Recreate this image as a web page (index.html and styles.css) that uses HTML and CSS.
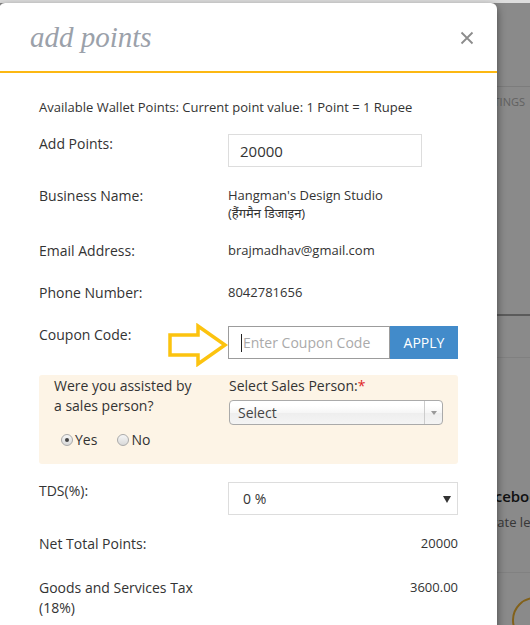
FILE: index.html
```html
<!DOCTYPE html>
<html lang="en">
<head>
  <meta charset="UTF-8">
  <meta name="viewport" content="width=device-width, initial-scale=1.0">
  <title>Add Points</title>
  <link rel="stylesheet" href="styles.css">
</head>
<body>
  <!-- page behind the dialog -->
  <div class="page">
    <div class="topbar"></div>
    <header class="site-header"></header>
    <nav class="tabs"><span>Settings</span></nav>
    <div class="filters"></div>
    <div class="card">
      <h4 class="card-title">Facebook</h4>
      <p class="card-text">Generate leads</p>
      <div class="card-foot"><span class="card-badge"></span></div>
    </div>
  </div>

  <div class="overlay"></div>

  <div class="modal">
    <div class="modal-header">
      <h2 class="modal-title">add points</h2>
      <button class="close-btn" aria-label="Close">
        <svg width="14" height="14" viewBox="0 0 14 14"><path d="M1.5 1.5L12.5 12.5M12.5 1.5L1.5 12.5" stroke="#8c8c8c" stroke-width="1.8" fill="none"/></svg>
      </button>
    </div>

    <div class="modal-body">
      <p class="wallet-note">Available Wallet Points: Current point value: 1 Point = 1 Rupee</p>

      <div class="form-row">
        <label>Add Points:</label>
        <div class="field"><input class="text-input" type="text" value="20000"></div>
      </div>

      <div class="form-row">
        <label>Business Name:</label>
        <div class="value">Hangman's Design Studio<br>(हैंगमैन डिजाइन)</div>
      </div>

      <div class="form-row">
        <label>Email Address:</label>
        <div class="value">brajmadhav@gmail.com</div>
      </div>

      <div class="form-row">
        <label>Phone Number:</label>
        <div class="value">8042781656</div>
      </div>

      <div class="form-row coupon-row">
        <label>Coupon Code:</label>
        <div class="field coupon-group">
          <svg class="pointer-arrow" width="62" height="44" viewBox="0 0 62 44">
            <polygon points="2,12 30,12 30,3 57,22 30,41 30,32 2,32" fill="none" stroke="#fcc30f" stroke-width="3.5" stroke-linejoin="miter"/>
          </svg>
          <div class="coupon-input">
            <span class="caret"></span>
            <input type="text" placeholder="Enter Coupon Code">
          </div>
          <button class="apply-btn">APPLY</button>
        </div>
      </div>

      <div class="sales-box">
        <div class="sales-question">
          <p>Were you assisted by a sales person?</p>
          <div class="radios">
            <label class="radio"><span class="radio-dot checked"></span>Yes</label>
            <label class="radio"><span class="radio-dot"></span>No</label>
          </div>
        </div>
        <div class="sales-select">
          <p>Select Sales Person:<span class="req">*</span></p>
          <div class="chosen">
            <span>Select</span>
            <span class="chosen-arrow"></span>
          </div>
        </div>
      </div>

      <div class="form-row">
        <label>TDS(%):</label>
        <div class="field">
          <div class="select-box"><span>0 %</span><span class="select-caret"></span></div>
        </div>
      </div>

      <div class="form-row total-row">
        <label>Net Total Points:</label>
        <div class="value amount">20000</div>
      </div>

      <div class="form-row">
        <label>Goods and Services Tax (18%)</label>
        <div class="value amount">3600.00</div>
      </div>
    </div>
  </div>
</body>
</html>
```

FILE: styles.css
```css
* { margin: 0; padding: 0; box-sizing: border-box; }

body {
  font-family: 'Open Sans', 'Noto Sans', sans-serif;
  color: #333;
  background: #fff;
  height: 625px;
  overflow: hidden;
  position: relative;
}

/* ---- background page ---- */
.topbar { height: 3px; background: #dedede; }
.site-header { height: 84px; border-bottom: 1px solid #e6e6e6; }
.tabs {
  display: flex;
  justify-content: flex-end;
  height: 30px;
  padding: 7px 5px 0;
  font-size: 11px;
  line-height: 16px;
  color: #b4b4b4;
  text-transform: uppercase;
}
.filters {
  margin-top: 197px;
  height: 44px;
  border-top: 2px solid #a8a8a8;
  border-bottom: 1px solid #ececec;
}
.card { padding-top: 128px; }
.card-title {
  padding-left: 478px;
  font-size: 15px;
  line-height: 20px;
  font-weight: 600;
  color: #222;
  white-space: nowrap;
}
.card-text {
  padding-left: 460px;
  margin-top: 7px;
  font-size: 13px;
  line-height: 18px;
  color: #666;
  white-space: nowrap;
}
.card-foot {
  margin-top: 41px;
  border-top: 1px solid #eee;
  padding: 24px 0 0 512px;
}
.card-badge {
  display: block;
  width: 46px;
  height: 46px;
  border: 2px solid #f0b330;
  border-radius: 50%;
}

.overlay {
  position: absolute;
  top: 3px; left: 0; right: 0; bottom: 0;
  background: rgba(0, 0, 0, 0.46);
}

/* ---- dialog ---- */
.modal {
  position: absolute;
  top: 3px;
  left: -1px;
  width: 498px;
  height: 640px;
  background: #fff;
  border-radius: 6px 6px 0 0;
  box-shadow: 0 3px 9px rgba(0, 0, 0, 0.5);
}
.modal-header {
  height: 70px;
  display: flex;
  align-items: center;
  justify-content: space-between;
  padding: 0 23px 0 31px;
  border-bottom: 2px solid #fcb813;
}
.modal-title {
  font-family: 'Liberation Serif', serif;
  font-style: italic;
  font-weight: normal;
  font-size: 29px;
  color: #9ba1aa;
}
.close-btn {
  background: none;
  border: none;
  width: 14px;
  height: 14px;
  margin-top: 2px;
  cursor: pointer;
}
.close-btn svg { display: block; }

.modal-body { padding: 25px 39px 0 40px; }

.wallet-note {
  font-size: 13px;
  line-height: 18px;
  margin-bottom: 18px;
}

.form-row {
  display: flex;
  min-height: 23px;
  margin-bottom: 19px;
}
.form-row.total-row { margin-bottom: 21px; }
.form-row label {
  width: 189px;
  flex-shrink: 0;
  padding-right: 20px;
  font-size: 14px;
  line-height: 20px;
}
.field { flex: 1; }
.value {
  flex: 1;
  font-size: 13px;
  line-height: 18px;
}
.value.amount { text-align: right; }

.text-input {
  width: 194px;
  height: 33px;
  border: 1px solid #ddd;
  padding: 0 11px;
  font: 15px 'Open Sans', sans-serif;
  color: #333;
  outline: none;
}

/* coupon */
.coupon-row { margin-bottom: 16px; }
.coupon-group {
  position: relative;
  display: flex;
  margin-top: 1px;
}
.pointer-arrow {
  position: absolute;
  left: -60px;
  top: -3px;
}
.coupon-input {
  width: 162px;
  height: 33px;
  border: 1px solid #9c9c9c;
  display: flex;
  align-items: center;
  padding-left: 12px;
}
.caret {
  width: 1px;
  height: 18px;
  background: #222;
}
.coupon-input input {
  border: none;
  outline: none;
  width: 140px;
  padding-left: 1px;
  font: 14px 'Open Sans', sans-serif;
  color: #333;
}
.coupon-input input::placeholder { color: #aaa; }
.apply-btn {
  width: 68px;
  height: 33px;
  border: none;
  background: #428bca;
  color: #fff;
  font: 14px 'Open Sans', sans-serif;
}

/* sales person block */
.sales-box {
  display: flex;
  background: #fdf4e6;
  border-radius: 3px;
  padding: 1px 15px 14px;
  margin-bottom: 17px;
  font-size: 14px;
  line-height: 20px;
}
.sales-question { width: 175px; }
.sales-question p { max-width: 146px; }
.radios {
  display: flex;
  gap: 20px;
  margin: 14px 0 0 7px;
}
.radio {
  display: flex;
  align-items: center;
  gap: 2px;
}
.radio-dot {
  width: 12px;
  height: 12px;
  border: 1px solid #aaa;
  border-radius: 50%;
  background: linear-gradient(#f6f6f6, #d9d9d9);
  display: flex;
  align-items: center;
  justify-content: center;
}
.radio-dot.checked::after {
  content: "";
  width: 4px;
  height: 4px;
  border-radius: 50%;
  background: #444;
}
.sales-select { flex: 1; }
.req { color: #e02424; }
.chosen {
  margin-top: 4px;
  height: 25px;
  display: flex;
  align-items: center;
  justify-content: space-between;
  border: 1px solid #aaa;
  border-radius: 4px;
  background: linear-gradient(#fff 20%, #f6f6f6 50%, #eee 52%, #f4f4f4 100%);
  padding-left: 8px;
  color: #444;
}
.chosen-arrow {
  width: 18px;
  height: 100%;
  border-left: 1px solid #ccc;
  position: relative;
}
.chosen-arrow::after {
  content: "";
  position: absolute;
  left: 6px;
  top: 10px;
  border: 3px solid transparent;
  border-top: 4px solid #999;
}

/* tds select */
.select-box {
  margin-top: 1px;
  height: 33px;
  border: 1px solid #ddd;
  display: flex;
  align-items: center;
  justify-content: space-between;
  padding: 0 6px 0 14px;
  font-size: 14px;
}
.select-caret {
  border: 4px solid transparent;
  border-top: 7px solid #333;
  margin-top: 6px;
}
```
